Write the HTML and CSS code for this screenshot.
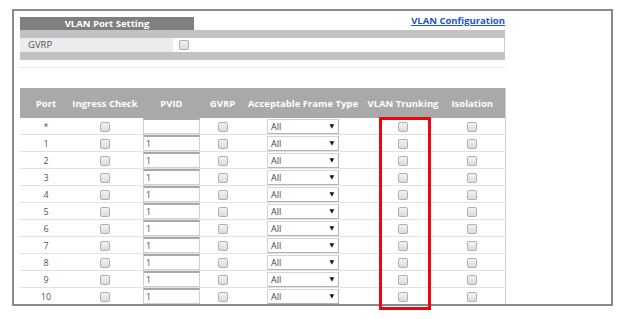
FILE: index.html
```html
<!DOCTYPE html>
<html lang="en">
<head>
    <meta charset="UTF-8">
    <title>VLAN Port Setting</title>
    <link rel="stylesheet" href="styles.css">
</head>
<body>
    <div class="frame">
        <div class="content">
            <div class="tabbar">
                <div class="tab">VLAN Port Setting</div>
                <a class="link" href="#">VLAN Configuration</a>
            </div>
            <div class="band"></div>
            <div class="gvrp-row">
                <div class="gvrp-label">GVRP</div>
                <div class="gvrp-value"><input type="checkbox" class="cb"></div>
            </div>
            <div class="band"></div>
            <div class="divider"></div>

            <table class="ports">
                <colgroup>
                    <col style="width:52px">
                    <col style="width:66px">
                    <col style="width:67px">
                    <col style="width:35px">
                    <col style="width:126px">
                    <col style="width:74px">
                    <col style="width:65px">
                </colgroup>
                <thead>
                    <tr>
                        <th>Port</th>
                        <th>Ingress Check</th>
                        <th>PVID</th>
                        <th>GVRP</th>
                        <th>Acceptable Frame Type</th>
                        <th>VLAN Trunking</th>
                        <th>Isolation</th>
                    </tr>
                </thead>
                <tbody id="rows"></tbody>
            </table>
        </div>
    </div>
    <div class="highlight"></div>

    <script>
        const ports = ['*', '1', '2', '3', '4', '5', '6', '7', '8', '9', '10'];
        const tbody = document.getElementById('rows');
        ports.forEach(function(p) {
            const pvid = p === '*' ? '' : '1';
            const tr = document.createElement('tr');
            tr.innerHTML =
                '<td>' + p + '</td>' +
                '<td><input type="checkbox" class="cb"></td>' +
                '<td><input type="text" class="pvid" value="' + pvid + '"></td>' +
                '<td><input type="checkbox" class="cb"></td>' +
                '<td><div class="select"><span>All</span><span class="arrow">&#9660;</span></div></td>' +
                '<td><input type="checkbox" class="cb"></td>' +
                '<td><input type="checkbox" class="cb"></td>';
            tbody.appendChild(tr);
        });
    </script>
</body>
</html>
```

FILE: styles.css
```css
body {
    margin: 0;
    padding: 9px 7px 0 12px;
    background-color: #fff;
    font-family: 'Open Sans', 'DejaVu Sans', sans-serif;
    color: #555;
}
.frame {
    width: 597px;
    height: 293px;
    border: 2px solid #8a8a8a;
    overflow: hidden;
}
.content {
    width: 485px;
    padding: 6px 0 0 6px;
}
.tabbar {
    display: flex;
    justify-content: space-between;
    align-items: flex-end;
    height: 13px;
}
.tab {
    width: 174px;
    height: 13px;
    line-height: 13px;
    background-color: #808080;
    color: #fff;
    font-weight: bold;
    font-size: 9.5px;
    text-align: center;
}
.link {
    color: #1c4fd6;
    font-weight: bold;
    font-size: 9.5px;
    line-height: 12px;
    margin-bottom: 3px;
}
.band {
    height: 8px;
    background-color: #c2c2c2;
}
.gvrp-row {
    display: flex;
    height: 14px;
    border-right: 1px solid #d0d0d0;
}
.gvrp-label {
    width: 145px;
    padding-left: 8px;
    background-color: #ececec;
    font-size: 9.5px;
    line-height: 14px;
}
.gvrp-value {
    flex: 1;
    display: flex;
    align-items: center;
    padding-left: 6px;
}
.divider {
    height: 1px;
    margin-top: 7px;
    background-color: #e6e6e6;
}
.ports {
    margin-top: 20px;
    width: 485px;
    table-layout: fixed;
    border-collapse: collapse;
    border-right: 1px solid #d0d0d0;
}
.ports th {
    height: 30px;
    padding: 0;
    background-color: #a9a9a9;
    color: #fff;
    font-size: 9.5px;
    font-weight: bold;
    white-space: nowrap;
    text-align: center;
}
.ports td {
    height: 16px;
    padding: 0;
    border-bottom: 1px solid #e2e2e2;
    font-size: 9px;
    color: #555;
    text-align: center;
    vertical-align: middle;
}
.cb {
    appearance: none;
    -webkit-appearance: none;
    width: 10px;
    height: 10px;
    margin: 0;
    border: 1px solid #b0b0b0;
    border-radius: 2px;
    background: linear-gradient(#f2f2f2, #dcdcdc);
    vertical-align: middle;
}
.pvid {
    box-sizing: border-box;
    width: 57px;
    height: 16px;
    margin: 0 0 0 5px;
    padding: 0 2px;
    display: block;
    border: 1px solid #cfcfcf;
    border-top: 2px solid #a8a8a8;
    font-family: 'Open Sans', 'DejaVu Sans', sans-serif;
    font-size: 9px;
    color: #7a4a10;
    background: #fff;
}
.select {
    box-sizing: border-box;
    width: 72px;
    height: 15px;
    margin-left: 27px;
    padding: 0 4px 0 3px;
    display: flex;
    justify-content: space-between;
    align-items: center;
    border: 1px solid #d4d4d4;
    border-right-color: #b4b4b4;
    border-bottom-color: #b4b4b4;
    background: #fff;
    font-size: 9px;
    color: #444;
}
.arrow {
    font-size: 6px;
    color: #111;
}
.highlight {
    position: absolute;
    left: 379px;
    top: 117px;
    width: 46px;
    height: 187px;
    border: 3px solid #e8080f;
}
```
